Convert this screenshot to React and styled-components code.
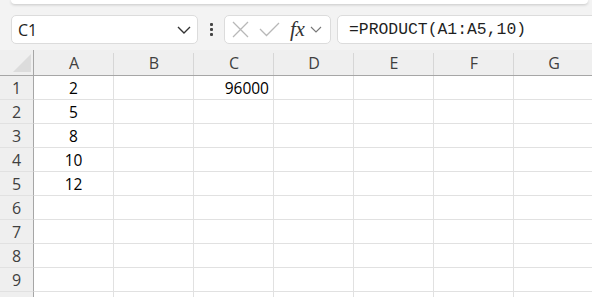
import React from "react";
import styled, { createGlobalStyle } from "styled-components";

const Global = createGlobalStyle`
  html, body { margin: 0; padding: 0; background: #f3f3f3; overflow: hidden; }
  body { font-family: "Open Sans", "Noto Sans", sans-serif; }
`;

const Page = styled.div`
  width: 592px;
  height: 297px;
  overflow: hidden;
  background: #f3f3f3;
`;

const Ribbon = styled.div`
  height: 4px;
  margin: 0 4px 0 11px;
  background: #ffffff;
  border-radius: 0 0 7px 7px;
  box-shadow: 0 1px 3px rgba(0, 0, 0, 0.18);
`;

const FormulaRow = styled.div`
  display: flex;
  align-items: center;
  height: 29px;
  margin: 11px 0 6px 11px;
`;

const Box = styled.div`
  box-sizing: border-box;
  height: 29px;
  background: #fff;
  border: 1px solid #dcdcdc;
  border-radius: 5px;
  display: flex;
  align-items: center;
`;

const NameBox = styled(Box)`
  width: 187px;
  padding: 0 6px 0 6px;
  justify-content: space-between;
  font-size: 16px;
  color: #222;
`;

const Dots = styled.div`
  width: 26px;
  display: flex;
  flex-direction: column;
  align-items: center;
  gap: 2px;
  span {
    width: 3px;
    height: 3px;
    background: #444;
    border-radius: 1px;
  }
`;

const FxBox = styled(Box)`
  width: 107px;
  padding: 0 0 0 7px;
`;

const Fx = styled.span`
  font-family: "Liberation Serif", "DejaVu Serif", serif;
  font-style: italic;
  font-size: 21px;
  color: #333;
  margin-left: 10px;
  letter-spacing: -0.3px;
`;

const FormulaBox = styled(Box)`
  flex: 1;
  margin-left: 6px;
  margin-right: -10px;
  padding-left: 11px;
  font-family: "Liberation Mono", "DejaVu Sans Mono", monospace;
  font-size: 16.4px;
  color: #1f1f1f;
`;

const Grid = styled.div`
  display: grid;
  grid-template-columns: 34px repeat(7, 80px);
  grid-template-rows: 26px repeat(10, 24px);
  background: #fff;
`;

const Corner = styled.div`
  background: #efefef;
  border-right: 1px solid #a6a6a6;
  border-bottom: 1px solid #a6a6a6;
  display: flex;
  align-items: flex-end;
  justify-content: flex-end;
  padding: 0 2px 3px 0;
`;

const ColHead = styled.div`
  background-color: #efefef;
  border-bottom: 1px solid #a6a6a6;
  background-image: linear-gradient(#d6d6d6, #d6d6d6);
  background-size: 1px 22px;
  background-position: right bottom;
  background-repeat: no-repeat;
  display: flex;
  align-items: center;
  justify-content: center;
  font-size: 16px;
  color: #3f3f3f;
  padding-top: 1px;
`;

const RowHead = styled.div`
  background: #efefef;
  border-right: 1px solid #a6a6a6;
  border-bottom: 1px solid #e1e1e1;
  display: flex;
  align-items: center;
  justify-content: center;
  font-size: 16px;
  color: #3f3f3f;
`;

const Cell = styled.div`
  border-right: 1px solid #e1e1e1;
  border-bottom: 1px solid #e1e1e1;
  display: flex;
  align-items: center;
  justify-content: ${(p) => (p.$align === "right" ? "flex-end" : "center")};
  padding: 0 4px;
  font-size: 15.5px;
  color: #000;
`;

const cols = ["A", "B", "C", "D", "E", "F", "G"];
const data = {
  A1: { v: "2" },
  A2: { v: "5" },
  A3: { v: "8" },
  A4: { v: "10" },
  A5: { v: "12" },
  C1: { v: "96000", align: "right" },
};

export default function App() {
  const rows = [1, 2, 3, 4, 5, 6, 7, 8, 9, 10];
  return (
    <Page>
      <Global />
      <Ribbon />
      <FormulaRow>
        <NameBox>
          <span>C1</span>
          <svg width="14" height="8" viewBox="0 0 14 8">
            <path d="M1 1 L7 7 L13 1" fill="none" stroke="#333" strokeWidth="1.4" />
          </svg>
        </NameBox>
        <Dots>
          <span />
          <span />
          <span />
        </Dots>
        <FxBox>
          <svg width="17" height="17" viewBox="0 0 17 17">
            <path d="M1 1 L16 16 M16 1 L1 16" stroke="#b8b8b8" strokeWidth="1.3" fill="none" />
          </svg>
          <svg width="21" height="15" viewBox="0 0 21 15" style={{ marginLeft: 10 }}>
            <path d="M1 7 L7.5 13.5 L20 1" stroke="#b8b8b8" strokeWidth="1.3" fill="none" />
          </svg>
          <Fx>fx</Fx>
          <svg width="12" height="7" viewBox="0 0 12 7" style={{ marginLeft: 5 }}>
            <path d="M1 1 L6 6 L11 1" stroke="#777" strokeWidth="1.1" fill="none" />
          </svg>
        </FxBox>
        <FormulaBox>=PRODUCT(A1:A5,10)</FormulaBox>
      </FormulaRow>
      <Grid>
        <Corner>
          <svg width="18" height="18" viewBox="0 0 18 18">
            <polygon points="18,0 18,18 0,18" fill="#dcdcdc" />
          </svg>
        </Corner>
        {cols.map((c) => (
          <ColHead key={c}>{c}</ColHead>
        ))}
        {rows.map((r) => (
          <React.Fragment key={r}>
            <RowHead>{r < 10 ? r : ""}</RowHead>
            {cols.map((c) => {
              const d = data[c + r];
              return (
                <Cell key={c} $align={d && d.align}>
                  {d ? d.v : ""}
                </Cell>
              );
            })}
          </React.Fragment>
        ))}
      </Grid>
    </Page>
  );
}
